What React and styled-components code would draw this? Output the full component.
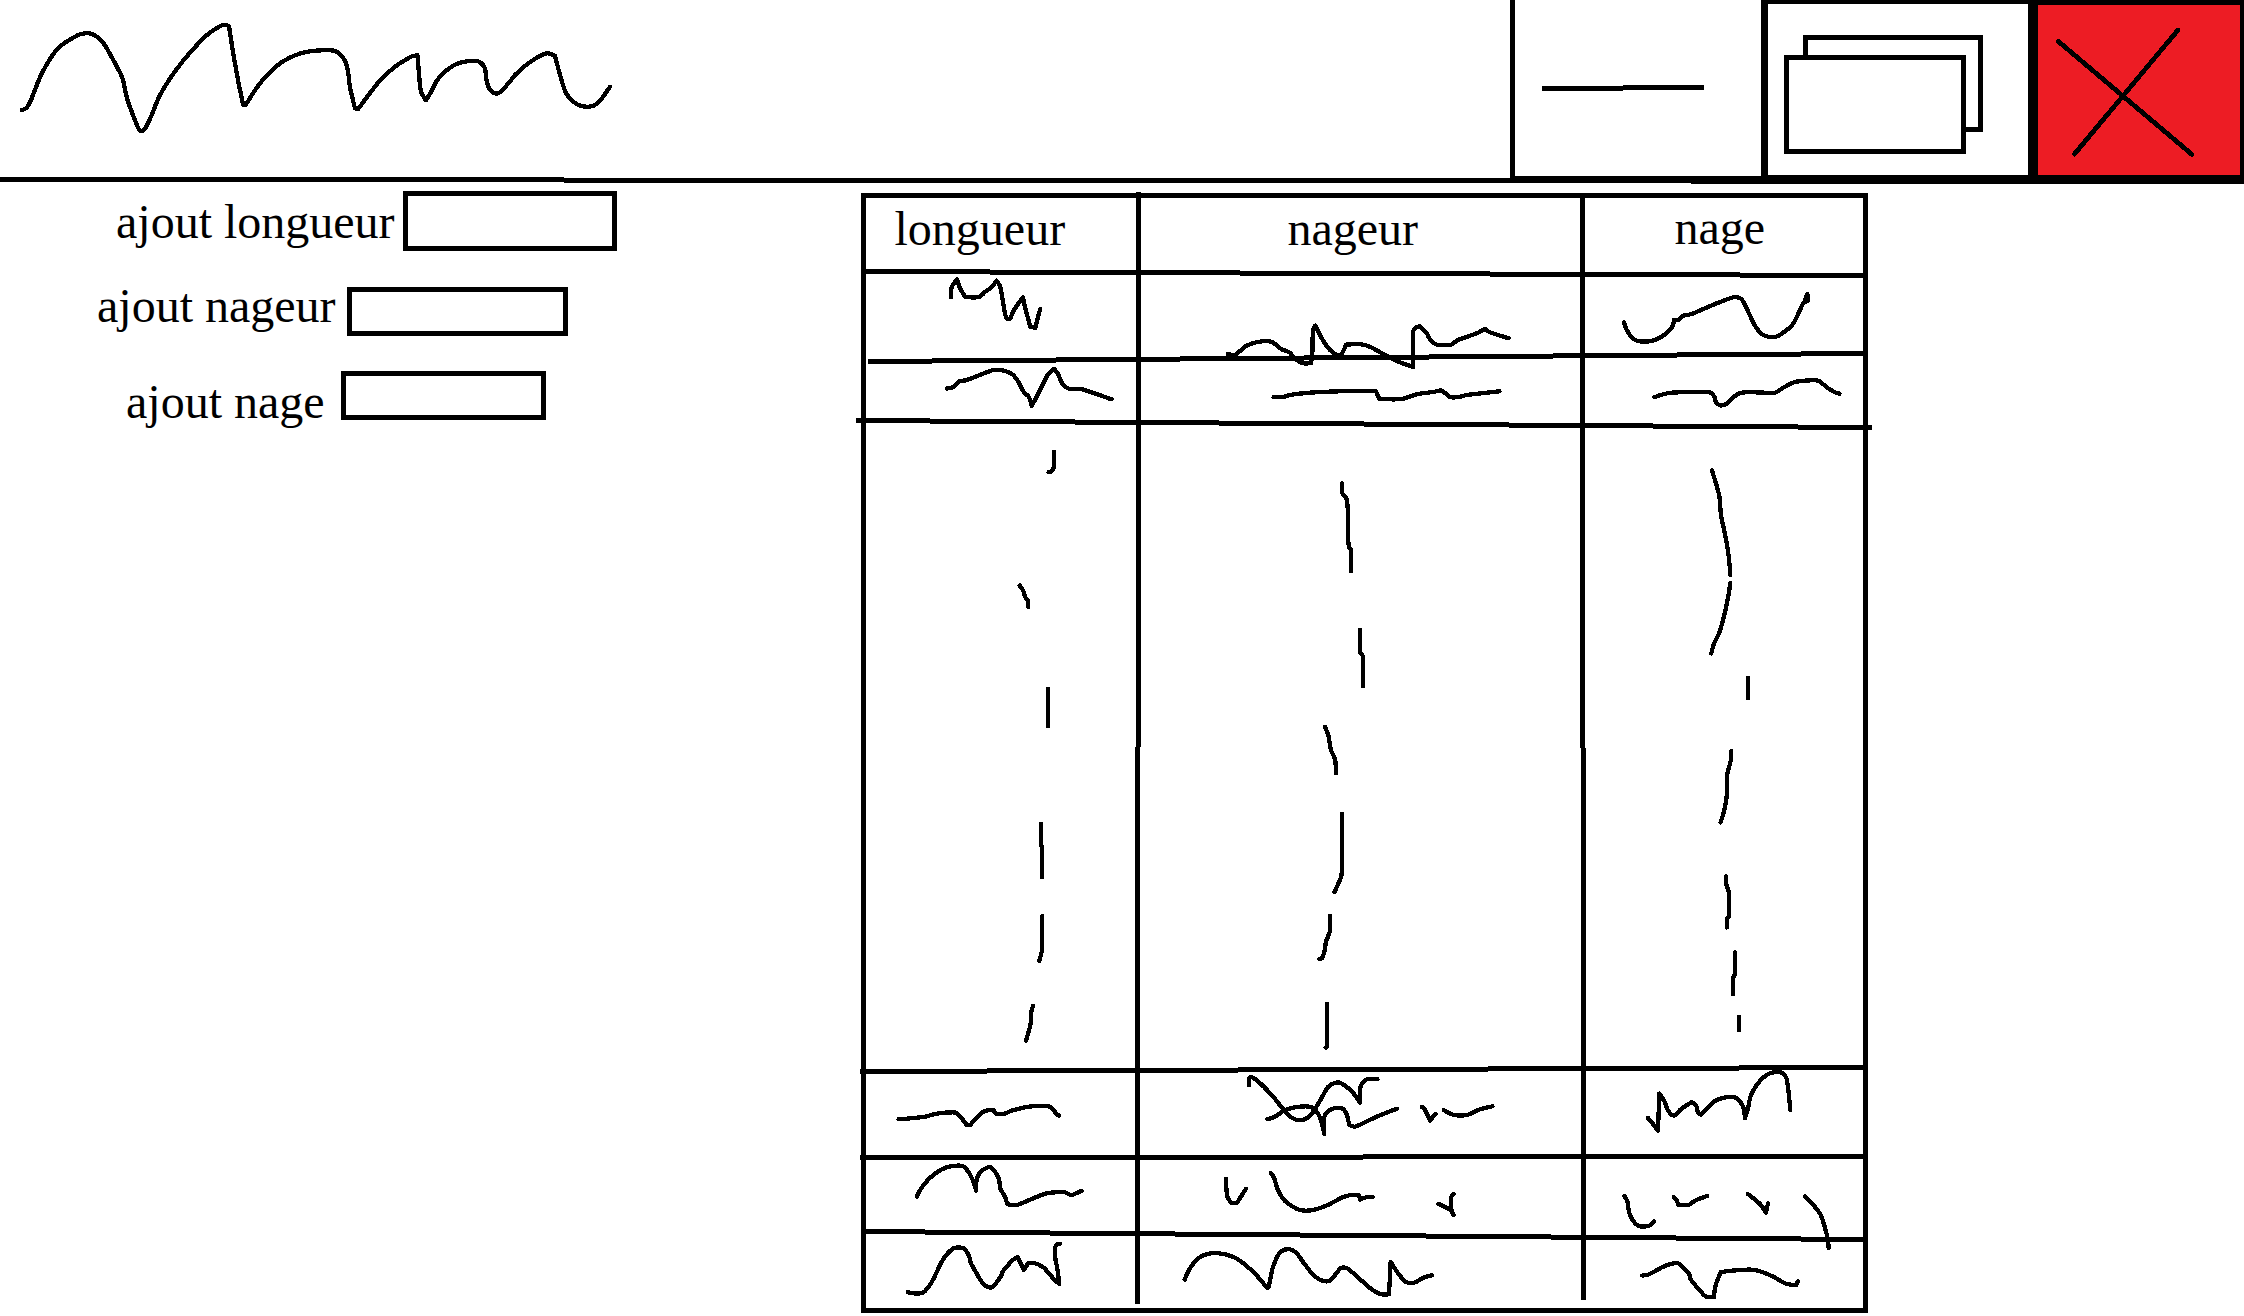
import React from "react";
import styled, { createGlobalStyle } from "styled-components";

const INK = "#000";
const PAPER = "#fff";
const RED = "#ed1c24";

const GlobalStyle = createGlobalStyle`
  *, *::before, *::after { box-sizing: border-box; }
  html, body { margin: 0; padding: 0; background: ${PAPER}; overflow: hidden; }
  body { font-family: "Liberation Serif", "Times New Roman", serif; color: ${INK}; }
`;

const Page = styled.div`
  width: 2244px;
  height: 1316px;
  display: flex;
  flex-direction: column;
  background: ${PAPER};
`;

const Drawing = styled.svg`
  display: block;
  overflow: visible;
  fill: none;
  stroke: ${INK};
  stroke-width: ${(p) => p.$pen || 4.3}px;
  stroke-linecap: ${(p) => p.$cap || "round"};
  stroke-linejoin: ${(p) => p.$join || "round"};
  shape-rendering: crispEdges;
  pointer-events: none;
`;

/* Window bar */

const TitleBar = styled.header`
  position: relative;
  display: flex;
  align-items: flex-start;
  flex: none;
  height: 184px;
`;

const Title = styled.div`
  flex: 1;
  height: 177px;
`;

const WindowButton = styled.button`
  display: flex;
  flex: none;
  margin: 0;
  padding: 0;
  border: 0 solid ${INK};
  border-radius: 0;
  background: ${PAPER};
`;

const MinimizeButton = styled(WindowButton)`
  width: 251px;
  height: 183px;
  border-width: 0 0 7px 5px;
`;

const RestoreButton = styled(WindowButton)`
  width: 267px;
  height: 184px;
  border-width: 4px 0 9px 7px;
`;

const CloseButton = styled(WindowButton)`
  width: 216px;
  height: 184px;
  border-width: 5px 4px 9px 10px;
  background: ${RED};
`;

/* Pen-drawn lines lie over the boxes they underline or divide. */
const RuleOverlay = styled(Drawing)`
  position: absolute;
  inset: 0;
`;

/* Content */

const Content = styled.main`
  display: flex;
  align-items: flex-start;
  flex: 1;
`;

const Form = styled.form`
  flex: none;
  width: 861px;
  padding-top: 7px;
  display: flex;
  flex-direction: column;
`;

const FormRow = styled.div`
  display: flex;
  align-items: flex-start;
  height: ${(p) => p.$height}px;
  margin-bottom: ${(p) => p.$after}px;
  padding-left: ${(p) => p.$indent}px;
`;

const Label = styled.label`
  flex: none;
  width: ${(p) => p.$width}px;
  margin-top: ${(p) => p.$drop}px;
  font-size: 48px;
  line-height: 48px;
  white-space: nowrap;
`;

const Field = styled.input`
  flex: none;
  width: ${(p) => p.$width}px;
  height: ${(p) => p.$height}px;
  margin: ${(p) => p.$drop}px 0 0;
  padding: 0 8px;
  border: 5px solid ${INK};
  border-radius: 0;
  background: ${PAPER};
  font: inherit;
  font-size: 32px;
  outline: none;
`;

const Table = styled.section`
  position: relative;
  flex: none;
  width: 1007px;
  height: 1120px;
  margin-top: 9px;
  border: 5px solid ${INK};
  display: grid;
  grid-template-columns: 272px 445px 280px;
  grid-template-rows: 74px 86px 66px 645px 88px 78px 73px;
`;

const HeadCell = styled.div`
  padding: ${(p) => p.$drop}px 0 0 ${(p) => p.$indent}px;
  font-size: 48px;
  line-height: 48px;
  white-space: nowrap;
`;

const Cell = styled.div`
  min-width: 0;
  min-height: 0;
`;

/* Rounds the gentle bends of a pen stroke and leaves its sharp turns and long straights as they are. */
function tangent(prev, at, next) {
  if (!prev || !next) return null;
  const ax = at[0] - prev[0];
  const ay = at[1] - prev[1];
  const bx = next[0] - at[0];
  const by = next[1] - at[1];
  const la = Math.hypot(ax, ay);
  const lb = Math.hypot(bx, by);
  if (!la || !lb) return null;
  const cos = (ax * bx + ay * by) / (la * lb);
  if (cos < 0.6) return null;
  const tx = ax / la + bx / lb;
  const ty = ay / la + by / lb;
  const reach = Math.min(la, lb) / 3 / Math.hypot(tx, ty);
  return [tx * reach, ty * reach];
}

function smoothStroke(stroke) {
  const pts = stroke.split("L").map((pair) => pair.trim().split(/\s+/).map(Number));
  let d = `M${pts[0][0]} ${pts[0][1]}`;
  for (let i = 0; i < pts.length - 1; i += 1) {
    const a = pts[i];
    const b = pts[i + 1];
    const ta = tangent(pts[i - 1], a, b) || [0, 0];
    const tb = tangent(a, b, pts[i + 2]) || [0, 0];
    const curve = [a[0] + ta[0], a[1] + ta[1], b[0] - tb[0], b[1] - tb[1], b[0], b[1]];
    d += `C${curve.map((n) => n.toFixed(2)).join(" ")}`;
  }
  return d;
}

function Scribble({ d }) {
  return <path d={d.split("M").filter(Boolean).map(smoothStroke).join("")} />;
}

const TITLE_SCRIBBLE =
  "M22 110L26.5 108L31 100L40 77.3L49.8 59.3L59 47.3L69.4 40L81 34L92 34L103 42.7L116 65L122.5 78.3L127.3 99.3L138.8 129.3L141.6 131.3L145.3 128.3L152.7 112.7L156 104L161 93.3L175.5 70.7L190 52.7L209 33.3L223.7 24.7L229 26L232.7 50L238 80L243.3 105.3L245.7 104.7L257 87.3L269.4 72.7L283.7 61L306 52L334.7 51L344.5 60L348 71.7L350 87.3L355 108.3L358.4 108.7L379.6 81L395 66.7L412 56.3L417.5 55.3L421 91.7L426 100.3L431.8 90.7L436.7 80.7L447 70L459 63L477.5 61L484.5 67.3L486.5 80L489.8 89.7L494.7 93.3L498.8 93L509.4 82.3L515 75L530.6 61.7L547 53.3L555 55.7L561 78.3L566.5 94L574.7 102.7L581.6 106L592.7 106L600 100.7L610 86.7";

const TITLE_RULE = "M0 179.5H564M564 180.5H1691M1691 181.5H1761";

const TABLE_RULES = [
  "M866 271.5H990M990 272.5H1240M1240 273.5H1490M1490 274.5H1740M1740 275.5H1864",
  "M868 361.5H932M932 360.5H1056M1056 359.5H1180M1180 358.5H1304M1304 357.5H1429M1429 356.5H1553M1553 355.5H1677M1677 354.5H1801M1801 353.5H1864",
  "M856 420.5H930M930 421.5H1075M1075 422.5H1219M1219 423.5H1364M1364 424.5H1509M1509 425.5H1653M1653 426.5H1798M1798 427.5H1872",
  "M860 1071.5H987M987 1070.5H1238M1238 1069.5H1488M1488 1068.5H1739M1739 1067.5H1864",
  "M860 1157.5H1363M1363 1156.5H1864",
  "M861 1231.5H925M925 1232.5H1050M1050 1233.5H1175M1175 1234.5H1300M1300 1235.5H1426M1426 1236.5H1551M1551 1237.5H1676M1676 1238.5H1801M1801 1239.5H1864",
  "M1138.5 192V747M1137.5 747V1304",
  "M1582.5 195V748M1583.5 748V1300",
];

const COLUMNS = [
  { x: 866, width: 272, name: "longueur", indent: 28.5, drop: 7 },
  { x: 1138, width: 445, name: "nageur", indent: 149.5, drop: 7 },
  { x: 1583, width: 280, name: "nage", indent: 91.5, drop: 6 },
];

const ROWS = [
  {
    y: 272,
    height: 86,
    cells: [
      "M951 297.3L951.7 287.3L957 279.3L959.7 287.3L965.3 297L979.3 297L985.3 291.7L991.7 287.3L996.3 280.7L1000 286L1002.7 300L1005.3 315L1007.3 319.3L1010 318.7L1014 310L1023 297.3L1025.3 308.3L1030.3 326.7L1035.3 328L1037.7 318.3L1040.3 308.7",
      "M1228 354L1235 355L1246.7 345.7L1261.7 341.3L1271.7 342L1281.7 349.3L1289.3 352.3L1293.3 356.7L1301.7 363L1311 363L1312.3 353.3L1313 330L1315.3 325.7L1320 335L1326 345L1330.7 350.7L1338.3 355L1341.7 354L1346 344.7L1365 345L1383.3 354L1400 362.3L1413.3 367L1412.7 336.7L1414 329.3L1419.7 326L1426.7 333.3L1430 339.3L1436.7 344.7L1451 344.7L1457.3 340.3L1476.7 333.3L1485 329L1490 332.3L1508.5 338.3",
      "M1624 322.3L1626 328.3L1631.7 337.3L1637.7 341L1651.7 341L1662.7 336L1672.3 326.7L1674 320L1678.3 320L1682.7 316L1691.7 314L1716.7 303.3L1734.7 297L1741.7 299.3L1749.3 314L1755 325.7L1761.7 334L1769.3 337L1777.3 336.3L1791.7 325.7L1797.7 315L1803.3 303.3L1808 301L1807.3 294L1805 300",
    ],
  },
  {
    y: 358,
    height: 66,
    cells: [
      "M946.7 388.5L953.3 387L959.3 381.3L966 380.3L993.3 370L1001 370L1012.3 374.3L1017.7 380.7L1024 392.3L1028.7 396.7L1031.7 405.7L1036.7 396.7L1048.3 374L1054 368.7L1057.7 373.3L1062.7 384L1068.7 388.7L1080.7 389L1111.5 399.3",
      "M1273.5 397.3L1283.3 397L1290 395L1310 392.7L1350 391L1375.7 390.7L1379.3 399L1401.7 399L1416.7 394.3L1433.3 392L1441.7 390.7L1450 397L1458.3 397L1466.7 395L1499.5 391.3",
      "M1654.5 397.3L1661.7 394.7L1671 392.7L1710 392.3L1714.3 396.7L1716 402.3L1720 405.3L1725.7 404.3L1740 393L1775 392.7L1783.3 387.7L1795 382L1818.3 380.7L1826.7 387.3L1836 392.7L1839.5 393.7",
    ],
  },
  {
    y: 424,
    height: 645,
    cells: [
      "M1054 452L1054 466.7L1051.7 471L1048.5 472.3M1019.7 585.5L1023.3 591L1025.3 597.3L1028 601L1028.3 607M1048 689L1048 726M1041 824L1041 845L1042 847L1042 877M1042.3 916L1042 950L1039.3 960.7M1033 1006L1031 1013.3L1030.7 1023.3L1026 1040.7",
      "M1342 483.5L1342.3 493.3L1346 497.3L1348 511.7L1348 536.7L1349.3 548L1351 550L1351 571M1360 630L1360 651.7L1363 656.7L1363 686M1325 727L1328.3 735L1331 750L1335 759.3L1336 773M1342 814L1342 870L1341 877.3L1334.5 892M1330 916L1330 930.7L1326 941.7L1324.7 950L1322 958L1319.5 959M1327 1004L1327 1046L1325.7 1047.7",
      "M1712 470.5L1719.3 496L1721 515L1726.7 542.8L1730 568.5L1730.3 575M1730.3 583L1728.7 594L1725 612L1719.3 632.6L1714 643.6L1711.3 653.5M1748 678L1748 698M1731.3 751L1731 759.5L1727 776L1726.7 796L1723.3 813.7L1720.5 822.5M1726 876.5L1726 883L1729 892.8L1729 916L1727 918.5L1727 927.5M1735 952.5L1735 974L1733 977.8L1733 994M1739 1017L1739 1030",
    ],
  },
  {
    y: 1069,
    height: 88,
    cells: [
      "M898.5 1119.3L906.7 1118.7L925 1116.7L936.7 1113.7L956 1112.7L961.7 1118.3L966.7 1125L970 1125L976.7 1117.7L984.3 1111.3L993.3 1110L996 1114L1003.3 1114L1011.7 1110.7L1023.3 1107.7L1035 1106L1048.3 1106.3L1053.3 1109.3L1056.7 1114.7L1059.3 1115.5",
      "M1249 1085L1249.3 1078.3L1251.3 1076.7L1257.3 1080.7L1274 1097.7L1283.3 1109.3L1291.7 1117.7L1299 1120.3L1306.7 1118.3L1313.3 1111.7L1321.7 1097.7L1328.3 1086.7L1335.7 1082.7L1340.7 1083L1351.7 1091.3L1360 1103L1360.7 1086L1366.7 1079.3L1377.5 1079.3M1267.5 1119.3L1275 1116.7L1284 1110.7L1296.7 1107L1311.7 1107.3L1318.3 1114L1322.7 1126.7L1324.3 1134L1324.3 1116.7L1328.3 1111L1335 1108L1342.7 1108.7L1346.3 1113.3L1349.3 1125L1355 1126.7L1376.7 1116.7L1397 1108.7M1421.8 1106.8L1425 1110L1430 1120.5L1435.5 1114M1443.8 1110L1453.3 1114.7L1466.7 1115L1480 1109.3L1492.5 1106.3",
      "M1648 1118L1651.7 1122.3L1658 1131L1659.3 1093.5L1664.3 1101L1667.7 1110L1672.7 1115.3L1676 1115L1680 1110L1691.7 1102L1696.3 1106L1697.7 1111.7L1701 1114.8L1715 1101L1728.3 1097L1735 1097.3L1742.7 1105.7L1745 1118.3L1748 1108.3L1750.7 1096L1756.7 1085L1767.7 1074.3L1779.7 1071.3L1786 1077.3L1788.3 1090L1790.3 1110",
    ],
  },
  {
    y: 1157,
    height: 78,
    cells: [
      "M916.8 1196.7L922.3 1186.7L934 1174.3L946.7 1167.3L962.7 1166L968.3 1171.7L974 1183.3L976 1190.5L976.3 1181.7L980 1172.3L989.3 1166.7L993.3 1169.3L999 1179.3L1000.3 1188.3L1005 1196.7L1007.3 1204.3L1016.7 1205L1046.7 1193.3L1065 1192.3L1071 1195L1081.7 1190.7",
      "M1226 1179L1227.3 1196.7L1231.7 1203.3L1236.7 1203.3L1246 1188.7M1270.7 1173L1274 1177.7L1277.7 1189.3L1285 1201L1300 1210L1313.3 1210L1328.3 1204.7L1343.3 1197L1354 1194.7L1359 1195.3L1360.3 1199.5L1366 1197.3L1372.7 1197.3M1453.5 1194L1451.3 1197L1451.3 1209.3L1453.5 1215M1438.3 1203.7L1450.7 1210",
      "M1624.3 1196L1627.3 1201L1630 1215L1638.3 1225.7L1649 1225.7L1654 1221.5M1673.7 1197L1676.7 1200L1678 1204.7L1688.3 1205L1695 1200.7L1707 1196M1747.8 1194L1760 1204L1766 1212.7L1768 1203.3M1805 1196.5L1812.7 1204.3L1820.7 1215L1827.3 1236.7L1828.7 1248",
    ],
  },
  {
    y: 1235,
    height: 73,
    cells: [
      "M908 1292L910.7 1293L922.3 1293L928.3 1287.3L933.3 1279.3L941.7 1261.7L947.7 1253.3L954.3 1248L963.7 1248L968.7 1255L971 1263.3L982.7 1283.3L987.7 1287L992.7 1287L1001 1276L1002.7 1271.7L1012.7 1260L1017.7 1257L1023.7 1270L1028.3 1263L1034 1263L1043.3 1267.3L1054 1279.3L1059.3 1284L1057.3 1268.3L1055.3 1258.3L1055.3 1246.7L1057.5 1244L1060 1243.7",
      "M1184.7 1279.5L1190 1268.3L1198.3 1258.3L1207.3 1254L1219.3 1253.3L1235 1257.7L1246.7 1266L1258.3 1277.3L1267 1288L1268.7 1287.3L1273.3 1266L1280 1252.7L1288 1249L1295.7 1252.3L1303.3 1262.3L1314 1275.7L1323.3 1281L1330 1280.7L1341 1268L1347.3 1268.3L1370 1288L1380 1294L1389 1294.3L1390.7 1261.7L1397.7 1272.7L1406 1282L1414.3 1282.7L1423.3 1277.7L1431.7 1275.3",
      "M1642.3 1275.5L1648.3 1274.7L1663.3 1266.7L1674 1263.3L1679.3 1263.7L1689.3 1274.3L1690.7 1279.3L1706 1296.7L1714 1297L1715.7 1285L1721 1272L1736.7 1270.3L1755 1270L1773.3 1276.7L1785 1283.3L1796 1285.3L1798 1281.3",
    ],
  },
];

const FIELDS = [
  { id: "longueur", text: "ajout longueur", indent: 116, labelWidth: 287, labelDrop: 7, fieldDrop: 0, width: 214, fieldHeight: 60, height: 60, after: 30 },
  { id: "nageur", text: "ajout nageur", indent: 97, labelWidth: 250, labelDrop: 1, fieldDrop: 6, width: 221, fieldHeight: 49, height: 55, after: 35 },
  { id: "nage", text: "ajout nage", indent: 126, labelWidth: 215, labelDrop: 7, fieldDrop: 0, width: 205, fieldHeight: 49, height: 55, after: 0 },
];

function WindowBar() {
  return (
    <TitleBar>
      <Title>
        <Drawing width="640" height="177" viewBox="0 0 640 177">
          <Scribble d={TITLE_SCRIBBLE} />
        </Drawing>
      </Title>
      <MinimizeButton type="button">
        <Drawing $pen={5} $cap="butt" width="246" height="176" viewBox="1515 0 246 176">
          <path d="M1542 88.5H1623M1623 87.5H1704" />
        </Drawing>
      </MinimizeButton>
      <RestoreButton type="button">
        <Drawing $pen={5} $join="miter" width="260" height="171" viewBox="1768 4 260 171">
          <rect x="1805.5" y="37.5" width="175" height="92" fill={PAPER} />
          <rect x="1786.5" y="57.5" width="177" height="94" fill={PAPER} />
        </Drawing>
      </RestoreButton>
      <CloseButton type="button">
        <Drawing $pen={4.8} width="202" height="170" viewBox="2038 5 202 170">
          <path d="M2058.5 41.5L2192 154.5M2178 30L2074.5 154" />
        </Drawing>
      </CloseButton>
      <RuleOverlay $pen={5} $cap="butt" width="2244" height="184" viewBox="0 0 2244 184">
        <path d={TITLE_RULE} />
      </RuleOverlay>
    </TitleBar>
  );
}

function AddForm() {
  return (
    <Form>
      {FIELDS.map((f) => (
        <FormRow key={f.id} $height={f.height} $after={f.after} $indent={f.indent}>
          <Label htmlFor={f.id} $width={f.labelWidth} $drop={f.labelDrop}>
            {f.text}
          </Label>
          <Field id={f.id} $width={f.width} $height={f.fieldHeight} $drop={f.fieldDrop} />
        </FormRow>
      ))}
    </Form>
  );
}

function SwimTable() {
  return (
    <Table>
      {COLUMNS.map((c) => (
        <HeadCell key={c.name} $indent={c.indent} $drop={c.drop}>
          {c.name}
        </HeadCell>
      ))}
      {ROWS.map((row) =>
        row.cells.map((d, i) => {
          const col = COLUMNS[i];
          return (
            <Cell key={`${row.y}-${col.name}`}>
              <Drawing
                width={col.width}
                height={row.height}
                viewBox={`${col.x} ${row.y} ${col.width} ${row.height}`}
              >
                <Scribble d={d} />
              </Drawing>
            </Cell>
          );
        })
      )}
      <RuleOverlay $pen={5} $cap="butt" width="997" height="1110" viewBox="866 198 997 1110">
        {TABLE_RULES.map((d) => (
          <path key={d} d={d} />
        ))}
      </RuleOverlay>
    </Table>
  );
}

export default function App() {
  return (
    <>
      <GlobalStyle />
      <Page>
        <WindowBar />
        <Content>
          <AddForm />
          <SwimTable />
        </Content>
      </Page>
    </>
  );
}
